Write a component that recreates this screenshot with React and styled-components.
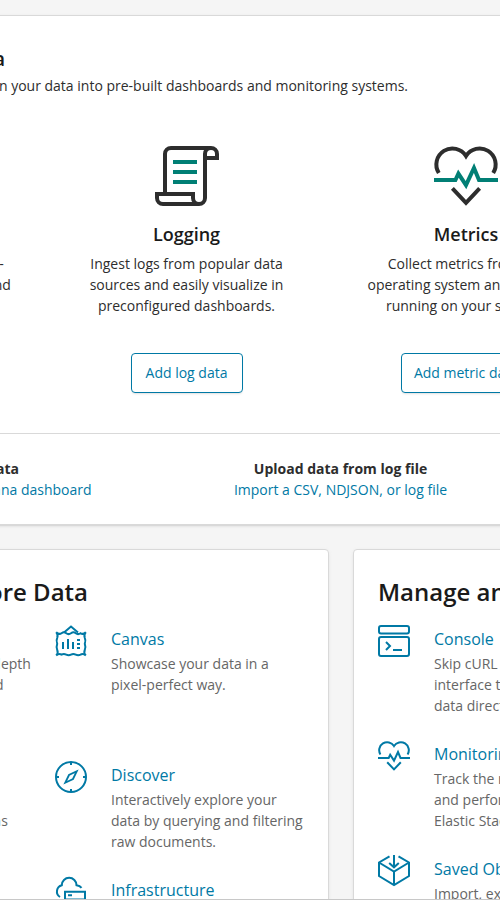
import React from "react";
import styled, { createGlobalStyle } from "styled-components";

const GlobalStyle = createGlobalStyle`
  *, *::before, *::after { box-sizing: border-box; }
  html, body { margin: 0; padding: 0; overflow: hidden; }
  body {
    background: #f5f5f5;
    color: #2d2d2d;
    font-family: "Open Sans", sans-serif;
    font-size: 14px;
    line-height: 21px;
  }
  h2, h3, h4, p { margin: 0; font-weight: 400; }
`;

const Viewport = styled.div`
  width: 500px;
  height: 900px;
  overflow: hidden;
  border-bottom: 1px solid #c8c8c8;
`;

const Page = styled.main`
  width: 1168px;
  margin-left: -243px;
  padding-top: 15px;
  display: flex;
  flex-direction: column;
  gap: 24px;
`;

const Panel = styled.section`
  background: #fff;
  border: 1px solid #d9d9d9;
  border-radius: 4px;
  box-shadow: 0 2px 2px -1px rgba(153, 153, 153, 0.3),
    0 1px 5px -2px rgba(153, 153, 153, 0.3);
`;

const AddDataPanel = styled(Panel)`
  height: 510px;
`;

const Intro = styled.header`
  padding: 24px 24px 0;
  height: 128px;
`;

const IntroTitle = styled.h2`
  font-size: 20px;
  font-weight: 600;
  line-height: 32px;
  padding-top: 3px;
  width: 223px;
  text-align: right;
  color: #1a1a1a;
  white-space: nowrap;
`;

const IntroText = styled.p`
  width: 626px;
  text-align: right;
  white-space: nowrap;
`;

const Solutions = styled.div`
  display: grid;
  grid-template-columns: repeat(3, 279.5px);
  margin-left: 9.25px;
  height: 289px;
`;

const Solution = styled.article`
  display: flex;
  flex-direction: column;
  align-items: center;
  text-align: center;
`;

const SolutionTitle = styled.h3`
  margin-top: 13px;
  font-size: 18px;
  font-weight: 600;
  line-height: 27px;
  color: #1a1a1a;
`;

const SolutionText = styled.p`
  width: 208px;
  height: 63px;
  margin-top: 5px;
`;

const OutlineButton = styled.button`
  height: 40px;
  min-width: 112px;
  margin-top: 37px;
  padding: 0 12px 2px;
  border: 1px solid #0079a5;
  border-radius: 4px;
  background: #fff;
  color: #0079a5;
  font: inherit;
  box-shadow: 0 2px 2px -1px rgba(153, 153, 153, 0.3);
`;

const Sources = styled.footer`
  display: grid;
  grid-template-columns: repeat(3, 380px);
  justify-content: center;
  border-top: 1px solid #d9d9d9;
  padding: 24px 1px 0 0;
  text-align: center;
`;

const SourceTitle = styled.h4`
  font-weight: 700;
`;

const Link = styled.a`
  color: #0079a5;
`;

const Directory = styled.div`
  display: grid;
  grid-template-columns: 572px 572px;
  gap: 24px;
`;

const DirectoryPanel = styled(Panel)`
  height: 600px;
  padding: 24px;
`;

const DirectoryTitle = styled.h2`
  width: ${(p) => (p.$width ? p.$width + "px" : "auto")};
  text-align: ${(p) => (p.$width ? "right" : "left")};
  white-space: nowrap;
  font-size: 24px;
  font-weight: 600;
  line-height: 36px;
  color: #1a1a1a;
`;

const Features = styled.div`
  display: grid;
  grid-template-columns: ${(p) => p.$columns};
  grid-template-rows: ${(p) => p.$rows};
  column-gap: 24px;
  justify-content: ${(p) => p.$align || "start"};
  margin-top: 15px;
`;

const Feature = styled.article`
  display: grid;
  grid-template-columns: 32px 1fr;
  column-gap: 24px;
  align-items: start;
`;

const FeatureTitle = styled.h3`
  font-size: 16px;
  line-height: 24px;
  margin-top: 2px;
  color: #0079a5;
`;

const FeatureText = styled.p`
  margin-top: 2px;
  color: #666;
`;

const Glyph = styled.svg`
  display: block;
  width: ${(p) => p.$size}px;
  height: ${(p) => p.$size}px;
  fill: none;
  stroke: ${(p) => (p.$size > 32 ? "#2d2d2d" : "#0079a5")};
  stroke-width: 2;
  overflow: visible;

  .accent { stroke: ${(p) => (p.$size > 32 ? "#017f75" : "#0079a5")}; }
`;

const shapes = {
  logging: (
    <>
      <path d="M5 25V5a3 3 0 0 1 3-3h20a3 3 0 0 1 3 3v2h-6" />
      <path d="M28 2a3 3 0 0 0-3 3v22a3 3 0 0 1-3 3H4a3 3 0 0 1-3-3v-2h18v2a3 3 0 0 0 3 3" />
      <path className="accent" d="M9 9h12M9 14h12M9 19h12" />
    </>
  ),
  heart: (
    <>
      <path d="M2.4 14.5A8 8 0 0 1 16 6a8 8 0 0 1 13.6 8.5M9.2 22.2l6.8 7.2 6.8-7.2" />
      <path className="accent" d="M0 18h10.7l1.500-3.200L16 20.600l4-8.600 2.500 6H32" />
    </>
  ),
  canvas: (
    <>
      <path d="M9 7.600l7-6 7 6" />
      <path d="M1.200 7.200Q4 10 6.500 8.200T11.250 8.200T16 8.200T20.750 8.200T25.500 8.200Q28 10 30.800 7.200Q28.600 10 29.800 13Q31 15 29.800 18.800Q31 22 29.800 25Q28.400 28 30.800 30.500Q28 28 25.500 29.600Q23.200 30.800 20.750 29.600T16 29.600T11.250 29.600T6.500 29.600Q4 28 1.200 30.500Q3.600 28 2.200 25Q1 22 2.200 18.800Q1 15 2.200 13Q3.400 10 1.200 7.200z" />
      <path d="M8 17v7M13 14v10M18 17v7M22 15h3M22 19h3M22 23h3" />
    </>
  ),
  console: (
    <>
      <rect x="1" y="1" width="30" height="7.500" rx="2" />
      <rect x="1" y="12" width="30" height="19" rx="2" />
      <path d="M8 17l4 4-4 4M15 25h9" />
    </>
  ),
  compass: (
    <>
      <circle cx="16" cy="16" r="15" />
      <path d="M16 1v3M16 28v3M1 16h3M28 16h3" />
      <path strokeWidth="1.8" d="M21.700 10.300L14 14l-3.700 7.700L18 18z" />
    </>
  ),
  cloud: (
    <>
      <path d="M5 21A6.500 6.500 0 0 1 6.800 9.200A7.350 7.350 0 0 1 21.500 9.200c2 .3 4 1.200 5 2.600" />
      <path d="M10 15.700h20v7.800H10zM10 23.500h20v7H10zM13 19.200h4" />
    </>
  ),
  box: (
    <path d="M11.500 1.300L1 7.500V21l15 9 15-9V7.500L20.500 1.300M1 7.500l15 9 15-9M16 16.500V30M16 0v12M11.200 8l4.800 4.300L20.800 8" />
  ),
};

const Icon = ({ name, size = 32 }) => (
  <Glyph $size={size} viewBox="0 0 32 32" aria-hidden="true">
    {shapes[name]}
  </Glyph>
);

const solutions = [
  { title: "APM", icon: "heart", text: "APM automatically collects in-depth performance metrics and errors from inside your applications.", action: "Add APM" },
  { title: "Logging", icon: "logging", text: "Ingest logs from popular data sources and easily visualize in preconfigured dashboards.", action: "Add log data" },
  { title: "Metrics", icon: "heart", text: "Collect metrics from the operating system and services running on your servers.", action: "Add metric data" },
];

const explore = [
  { title: "APM", icon: "heart", text: "Automatically collect in-depth performance metrics and errors from inside your applications." },
  { title: "Canvas", icon: "canvas", text: "Showcase your data in a pixel-perfect way." },
  { title: "Dashboard", icon: "console", text: "Display and share a collection of visualizations and saved searches." },
  { title: "Discover", icon: "compass", text: "Interactively explore your data by querying and filtering raw documents." },
  { title: "Graph", icon: "box", text: "Surface and analyze relevant relationships in your Elasticsearch data." },
  { title: "Infrastructure", icon: "cloud", text: "Explore infrastructure metrics and logs for common servers." },
];

const manage = [
  { title: "Console", icon: "console", text: "Skip cURL and use this JSON interface to work with your data directly." },
  { title: "Monitoring", icon: "heart", text: "Track the real-time health and performance of your Elastic Stack." },
  { title: "Saved Objects", icon: "box", text: "Import, export, and manage your saved searches." },
];

const FeatureItem = ({ item }) => (
  <Feature>
    <Icon name={item.icon} />
    <div>
      <FeatureTitle>{item.title}</FeatureTitle>
      <FeatureText>{item.text}</FeatureText>
    </div>
  </Feature>
);

export default function App() {
  return (
    <>
      <GlobalStyle />
      <Viewport>
        <Page>
          <AddDataPanel>
            <Intro>
              <IntroTitle>Add Data to Kibana</IntroTitle>
              <IntroText>
                Use these solutions to quickly turn your data into pre-built dashboards and monitoring systems.
              </IntroText>
            </Intro>
            <Solutions>
              {solutions.map((s) => (
                <Solution key={s.title}>
                  <Icon name={s.icon} size={64} />
                  <SolutionTitle>{s.title}</SolutionTitle>
                  <SolutionText>{s.text}</SolutionText>
                  <OutlineButton>{s.action}</OutlineButton>
                </Solution>
              ))}
            </Solutions>
            <Sources>
              <div>
                <SourceTitle>Add sample data</SourceTitle>
                <Link>Load a data set and a Kibana dashboard</Link>
              </div>
              <div>
                <SourceTitle>Upload data from log file</SourceTitle>
                <Link>Import a CSV, NDJSON, or log file</Link>
              </div>
            </Sources>
          </AddDataPanel>
          <Directory>
            <DirectoryPanel>
              <DirectoryTitle $width={306}>Visualize and Explore Data</DirectoryTitle>
              <Features $columns="249px 249px" $rows="136px 115px 115px" $align="end">
                {explore.map((item) => (
                  <FeatureItem key={item.title} item={item} />
                ))}
              </Features>
            </DirectoryPanel>
            <DirectoryPanel>
              <DirectoryTitle>Manage and Administer the Elastic Stack</DirectoryTitle>
              <Features $columns="249px" $rows="115px 115px 115px">
                {manage.map((item) => (
                  <FeatureItem key={item.title} item={item} />
                ))}
              </Features>
            </DirectoryPanel>
          </Directory>
        </Page>
      </Viewport>
    </>
  );
}
